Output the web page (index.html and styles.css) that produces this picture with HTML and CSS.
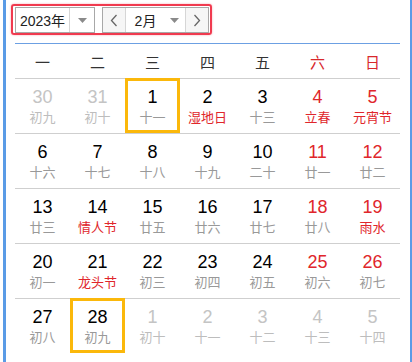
FILE: index.html
```html
<!DOCTYPE html>
<html lang="zh-CN">
<head>
<meta charset="utf-8">
<title>日历</title>
<link rel="stylesheet" href="styles.css">
</head>
<body>
<div class="frame">
  <div class="toolbar">
    <div class="picker">
      <div class="select year">
        <span class="sel-text">2023年</span>
        <span class="sel-arrow"><svg width="9" height="5" viewBox="0 0 9 5"><path d="M0 0h9L4.5 5z" fill="#8a8a8a"/></svg></span>
      </div>
      <div class="month-group">
        <span class="nav-btn"><svg width="8" height="13" viewBox="0 0 8 13"><path d="M6.5 1L1.5 6.5 6.5 12" fill="none" stroke="#666" stroke-width="1.3"/></svg></span>
        <div class="select month">
          <span class="sel-text">2月</span>
          <span class="sel-arrow"><svg width="9" height="5" viewBox="0 0 9 5"><path d="M0 0h9L4.5 5z" fill="#8a8a8a"/></svg></span>
        </div>
        <span class="nav-btn"><svg width="8" height="13" viewBox="0 0 8 13"><path d="M1.5 1L6.5 6.5 1.5 12" fill="none" stroke="#666" stroke-width="1.3"/></svg></span>
      </div>
    </div>
  </div>

  <div class="calendar">
    <div class="week-head">
      <span>一</span><span>二</span><span>三</span><span>四</span><span>五</span><span class="wk">六</span><span class="wk">日</span>
    </div>
    <div class="days">
      <div class="day other"><span class="num">30</span><span class="lunar">初九</span></div>
      <div class="day other"><span class="num">31</span><span class="lunar">初十</span></div>
      <div class="day selected"><span class="num">1</span><span class="lunar">十一</span></div>
      <div class="day"><span class="num">2</span><span class="lunar fest">湿地日</span></div>
      <div class="day"><span class="num">3</span><span class="lunar">十三</span></div>
      <div class="day wkend"><span class="num">4</span><span class="lunar fest">立春</span></div>
      <div class="day wkend"><span class="num">5</span><span class="lunar fest">元宵节</span></div>

      <div class="day"><span class="num">6</span><span class="lunar">十六</span></div>
      <div class="day"><span class="num">7</span><span class="lunar">十七</span></div>
      <div class="day"><span class="num">8</span><span class="lunar">十八</span></div>
      <div class="day"><span class="num">9</span><span class="lunar">十九</span></div>
      <div class="day"><span class="num">10</span><span class="lunar">二十</span></div>
      <div class="day wkend"><span class="num">11</span><span class="lunar">廿一</span></div>
      <div class="day wkend"><span class="num">12</span><span class="lunar">廿二</span></div>

      <div class="day"><span class="num">13</span><span class="lunar">廿三</span></div>
      <div class="day"><span class="num">14</span><span class="lunar fest">情人节</span></div>
      <div class="day"><span class="num">15</span><span class="lunar">廿五</span></div>
      <div class="day"><span class="num">16</span><span class="lunar">廿六</span></div>
      <div class="day"><span class="num">17</span><span class="lunar">廿七</span></div>
      <div class="day wkend"><span class="num">18</span><span class="lunar">廿八</span></div>
      <div class="day wkend"><span class="num">19</span><span class="lunar fest">雨水</span></div>

      <div class="day"><span class="num">20</span><span class="lunar">初一</span></div>
      <div class="day"><span class="num">21</span><span class="lunar fest">龙头节</span></div>
      <div class="day"><span class="num">22</span><span class="lunar">初三</span></div>
      <div class="day"><span class="num">23</span><span class="lunar">初四</span></div>
      <div class="day"><span class="num">24</span><span class="lunar">初五</span></div>
      <div class="day wkend"><span class="num">25</span><span class="lunar">初六</span></div>
      <div class="day wkend"><span class="num">26</span><span class="lunar">初七</span></div>

      <div class="day"><span class="num">27</span><span class="lunar">初八</span></div>
      <div class="day today"><span class="num">28</span><span class="lunar">初九</span></div>
      <div class="day other"><span class="num">1</span><span class="lunar">初十</span></div>
      <div class="day other"><span class="num">2</span><span class="lunar">十一</span></div>
      <div class="day other"><span class="num">3</span><span class="lunar">十二</span></div>
      <div class="day other"><span class="num">4</span><span class="lunar">十三</span></div>
      <div class="day other"><span class="num">5</span><span class="lunar">十四</span></div>
    </div>
  </div>
</div>
</body>
</html>
```
FILE: styles.css
```css
* { box-sizing: border-box; }
html, body {
  margin: 0;
  padding: 0;
  background: #fff;
}
body {
  width: 412px;
  height: 362px;
  overflow: hidden;
  font-family: "Liberation Sans", Arial, "Noto Sans CJK SC", sans-serif;
  color: #000;
}
.frame {
  margin-left: 3px;
  width: 409px;
  height: 362px;
  border-left: 3px solid #5a9be6;
  border-right: 2px solid #5a9be6;
  padding: 4px 10px 0 9px;
}
.toolbar {
  height: 39px;
  display: flex;
  align-items: flex-start;
}
.picker {
  margin-left: -4px;
  display: flex;
  gap: 7px;
  border: 2px solid #f03a4f;
  border-radius: 3px;
  box-shadow: 0 0 2px rgba(240, 40, 60, 0.45);
  padding: 1px 1px 0 2px;
  height: 31px;
}
.select {
  display: flex;
  height: 26px;
  background: #fff;
}
.year {
  width: 80px;
  border: 1px solid #a8a8a8;
}
.sel-text {
  flex: 1;
  display: flex;
  align-items: center;
  justify-content: center;
  font-size: 14px;
  color: #222;
}
.sel-arrow {
  width: 25px;
  display: flex;
  align-items: center;
  justify-content: center;
  border-left: 1px solid #d6d6d6;
  padding-top: 1px;
}
.month-group {
  display: flex;
  height: 26px;
  border: 1px solid #a8a8a8;
}
.nav-btn {
  width: 22px;
  display: flex;
  align-items: center;
  justify-content: center;
  background: #f6f6f6;
}
.month {
  width: 61px;
  height: 24px;
  border-left: 1px solid #d6d6d6;
  border-right: 1px solid #d6d6d6;
}
.month .sel-text { padding-left: 2px; }
.month .sel-arrow { border-left: none; width: 22px; }

.calendar {
  border-top: 1px solid #6ca0e3;
}
.week-head {
  display: grid;
  grid-template-columns: repeat(7, 55px);
  height: 34px;
  align-items: center;
  font-size: 15px;
  color: #333;
  text-align: center;
  font-family: "Noto Sans CJK SC", sans-serif;
}
.week-head .wk { color: #d8282c; }
.days {
  display: grid;
  grid-template-columns: repeat(7, 55px);
  grid-auto-rows: 55px;
}
.day {
  border-top: 1px solid #cfcfcf;
  display: flex;
  flex-direction: column;
  align-items: center;
  padding-top: 7px;
}
.num {
  font-size: 18px;
  line-height: 22px;
  color: #000;
}
.lunar {
  font-size: 13px;
  line-height: 18px;
  color: #999;
  font-family: "Noto Sans CJK SC", sans-serif;
}
.lunar.fest { color: #e0262b; }
.wkend .num { color: #e0262b; }
.other .num { color: #c4c4c4; }
.other .lunar { color: #bdbdbd; }
.selected, .today {
  border: 3px solid #fbb80b;
  padding-top: 5px;
}
.today { border-top-width: 3px; }
```
